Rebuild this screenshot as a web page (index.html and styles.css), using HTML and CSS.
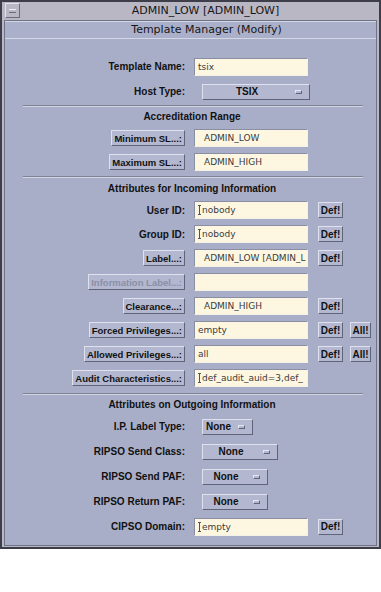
FILE: index.html
```html
<!doctype html>
<html lang="en">
  <head>
    <meta charset="UTF-8" />
    <meta name="viewport" content="width=device-width, initial-scale=1.0" />
    <title>Template Manager (Modify)</title>
    <link rel="stylesheet" href="styles.css">
  </head>
  <body>
    <div class="window">
      <div class="titlebar">
        <span class="menu-btn"><span></span></span>
        <span class="title">ADMIN_LOW [ADMIN_LOW]</span>
      </div>
      <div class="panel">
        <div class="panel-head">Template Manager (Modify)</div>
        <div class="content">
          <div class="row tall">
            <div class="lbl">Template Name:</div>
            <div class="field">tsix</div>
          </div>
          <div class="row tall">
            <div class="lbl">Host Type:</div>
            <div class="option wide"><span>TSIX</span><i></i></div>
          </div>

          <div class="sep"></div>
          <div class="heading h1">Accreditation Range</div>
          <div class="row">
            <div class="lbl"><button>Minimum SL...:</button></div>
            <div class="field sl">ADMIN_LOW</div>
          </div>
          <div class="row">
            <div class="lbl"><button>Maximum SL...:</button></div>
            <div class="field sl">ADMIN_HIGH</div>
          </div>

          <div class="sep s2"></div>
          <div class="heading h2">Attributes for Incoming Information</div>
          <div class="row">
            <div class="lbl">User ID:</div>
            <div class="field"><span class="caret"></span>nobody</div>
            <button class="def">Def!</button>
          </div>
          <div class="row">
            <div class="lbl">Group ID:</div>
            <div class="field"><span class="caret"></span>nobody</div>
            <button class="def">Def!</button>
          </div>
          <div class="row">
            <div class="lbl"><button>Label...:</button></div>
            <div class="field sl">ADMIN_LOW [ADMIN_L</div>
            <button class="def">Def!</button>
          </div>
          <div class="row">
            <div class="lbl"><button class="off">Information Label...:</button></div>
            <div class="field"></div>
          </div>
          <div class="row">
            <div class="lbl"><button>Clearance...:</button></div>
            <div class="field sl">ADMIN_HIGH</div>
            <button class="def">Def!</button>
          </div>
          <div class="row">
            <div class="lbl"><button>Forced Privileges...:</button></div>
            <div class="field">empty</div>
            <button class="def">Def!</button>
            <button class="all">All!</button>
          </div>
          <div class="row">
            <div class="lbl"><button>Allowed Privileges...:</button></div>
            <div class="field">all</div>
            <button class="def">Def!</button>
            <button class="all">All!</button>
          </div>
          <div class="row">
            <div class="lbl"><button>Audit Characteristics...:</button></div>
            <div class="field"><span class="caret"></span>def_audit_auid=3,def_</div>
          </div>

          <div class="sep s3"></div>
          <div class="heading h1">Attributes on Outgoing Information</div>
          <div class="row tall">
            <div class="lbl">I.P. Label Type:</div>
            <div class="option" style="width: 51px"><span>None</span><i></i></div>
          </div>
          <div class="row tall">
            <div class="lbl">RIPSO Send Class:</div>
            <div class="option" style="width: 76px"><span>None</span><i></i></div>
          </div>
          <div class="row tall">
            <div class="lbl">RIPSO Send PAF:</div>
            <div class="option" style="width: 66px"><span>None</span><i></i></div>
          </div>
          <div class="row tall">
            <div class="lbl">RIPSO Return PAF:</div>
            <div class="option" style="width: 66px"><span>None</span><i></i></div>
          </div>
          <div class="row tall">
            <div class="lbl">CIPSO Domain:</div>
            <div class="field"><span class="caret"></span>empty</div>
            <button class="def">Def!</button>
          </div>
        </div>
      </div>
    </div>
  </body>
</html>
```

FILE: styles.css
```css
/* Window frame */
body {
  margin: 0;
  background-color: #ffffff;
  font-family: "Liberation Sans", Arial, sans-serif;
  color: #111111;
}

.window {
  box-sizing: border-box;
  width: 381px;
  height: 549px;
  border: 2px solid #3e3e4a;
  background-color: #bab7c5;
}

.titlebar {
  display: flex;
  align-items: center;
  height: 17px;
}

.menu-btn {
  box-sizing: border-box;
  display: flex;
  align-items: center;
  justify-content: center;
  width: 15px;
  height: 15px;
  margin-left: 3px;
  border: 1px solid;
  border-color: #e2e0ea #6c6a7c #6c6a7c #e2e0ea;
}

.menu-btn span {
  width: 7px;
  height: 2px;
  border-top: 1px solid #f0eef5;
  border-bottom: 1px solid #6c6a7c;
}

.title {
  flex: 1;
  padding-left: 12px;
  text-align: center;
  font-family: "DejaVu Sans", sans-serif;
  font-size: 11px;
  color: #161616;
}

.panel {
  margin: 1px 2px 0;
  border: 1px solid #6e7388;
  background-color: #a9aec8;
}

.panel-head {
  height: 16px;
  line-height: 16px;
  padding-left: 32px;
  text-align: center;
  font-family: "DejaVu Sans", sans-serif;
  font-size: 11px;
  color: #161616;
  border-top: 1px solid #d4d7e4;
  border-bottom: 1px solid #6e7388;
  background-color: #aab0ca;
}

.content {
  padding: 15px 0 6px;
  border-top: 1px solid #d4d7e4;
  margin-top: -1px;
}

/* Rows */
.row {
  display: flex;
  align-items: center;
  height: 24px;
}

.row.tall {
  height: 25px;
}

.lbl {
  display: flex;
  justify-content: flex-end;
  width: 180px;
  font-size: 10px;
  font-weight: bold;
}

.field {
  box-sizing: border-box;
  width: 114px;
  height: 18px;
  margin-left: 9px;
  padding-left: 3px;
  overflow: hidden;
  white-space: nowrap;
  line-height: 17px;
  font-family: "DejaVu Sans", sans-serif;
  font-size: 9px;
  color: #3a3a3a;
  background-color: #fdf7e2;
  border: 1px solid;
  border-color: #8a8ea2 #f4f1e6 #f4f1e6 #8a8ea2;
}

.field.sl {
  padding-left: 9px;
}

.caret {
  display: inline-block;
  box-sizing: border-box;
  width: 3px;
  height: 10px;
  margin-right: 1px;
  vertical-align: -2px;
  border-top: 1px solid #555555;
  border-bottom: 1px solid #555555;
  background: linear-gradient(#555555, #555555) center / 1px 100% no-repeat;
}

/* Buttons */
button {
  box-sizing: border-box;
  height: 16px;
  padding: 0 2px;
  font-family: "Liberation Sans", Arial, sans-serif;
  font-size: 9.5px;
  font-weight: bold;
  color: #111111;
  background-color: #b3b8d0;
  border: 1px solid;
  border-color: #dfe2ee #5f6478 #5f6478 #dfe2ee;
  border-radius: 0;
}

button.off {
  color: #8a8fa6;
}

.def {
  width: 25px;
  margin-left: 10px;
  padding: 0;
  font-size: 10px;
}

.all {
  width: 21px;
  margin-left: 7px;
  padding: 0;
  font-size: 10px;
}

.option {
  box-sizing: border-box;
  display: flex;
  align-items: center;
  height: 16px;
  margin-left: 17px;
  font-size: 10px;
  font-weight: bold;
  background-color: #b3b8d0;
  border: 1px solid;
  border-color: #dfe2ee #5f6478 #5f6478 #dfe2ee;
}

.option.wide {
  width: 108px;
}

.option span {
  flex: 1;
  text-align: center;
}

.option i {
  box-sizing: border-box;
  width: 7px;
  height: 4px;
  margin: 1px 7px 0 4px;
  border: 1px solid;
  border-color: #e6e8f2 #5f6478 #5f6478 #e6e8f2;
}

/* Section headings and separators */
.sep {
  margin: 1px 13px 0 18px;
  border-top: 1px solid #7e8398;
  border-bottom: 1px solid #d2d5e2;
}

.sep.s2 {
  margin-top: 2px;
}

.sep.s3 {
  margin-top: 3px;
}

.heading {
  height: 19px;
  line-height: 19px;
  padding-left: 3px;
  text-align: center;
  font-size: 10px;
  font-weight: bold;
}

.heading.h2 {
  height: 20px;
  line-height: 21px;
}
```
